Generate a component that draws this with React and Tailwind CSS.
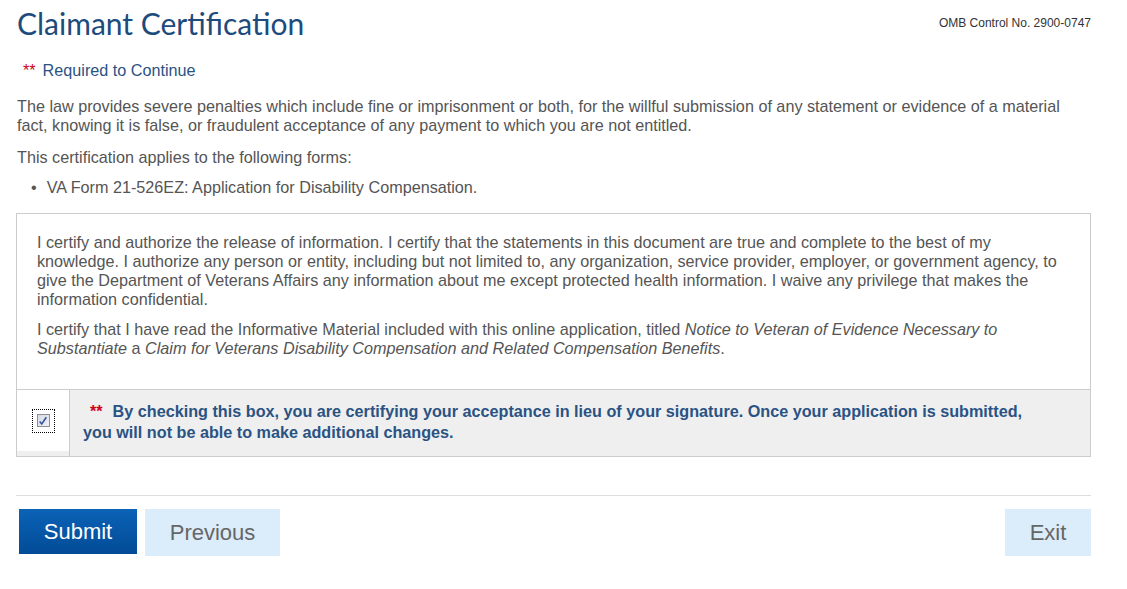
import React, { useState } from "react";

export default function App() {
  const [checked, setChecked] = useState(true);

  return (
    <div className="min-h-screen bg-white px-[17px] pt-[4px] font-['Liberation_Sans',Arial,sans-serif] text-[#555]">
      <div className="w-[1074px]">
        {/* Header */}
        <div className="flex items-start justify-between">
          <h1 className="font-['Lato',sans-serif] text-[30px] leading-[38px] text-[#1d4c7c]">Claimant Certification</h1>
          <p className="mt-[11px] text-[12px] leading-[16px] text-[#333]">OMB Control No. 2900-0747</p>
        </div>

        <p className="mt-[18px] pl-[6px] text-[16.2px] leading-[20px] text-[#2a5384]">
          <span className="mr-[7px] text-[#d0021b]">**</span>Required to Continue
        </p>

        <p className="mt-[17px] text-[16.2px] leading-[19px]">
          The law provides severe penalties which include fine or imprisonment or both, for the willful submission of any statement or evidence of a material fact, knowing it is false, or fraudulent acceptance of any payment to which you are not entitled.
        </p>
        <p className="mt-[13px] text-[16.2px] leading-[19px]">This certification applies to the following forms:</p>
        <ul className="mt-[11px] pl-[14px] text-[16.2px] leading-[19px]">
          <li className="flex gap-[10px]">
            <span>•</span>
            <span>VA Form 21-526EZ: Application for Disability Compensation.</span>
          </li>
        </ul>

        {/* Certification box */}
        <div className="mt-[16px] -ml-px w-[1075px] border border-[#ccc]">
          <div className="px-[20px] pt-[19px] pb-[31px] text-[16.2px] leading-[19px]">
            <p>
              I certify and authorize the release of information. I certify that the statements in this document are true and complete to the best of my knowledge. I authorize any person or entity, including but not limited to, any organization, service provider, employer, or government agency, to give the Department of Veterans Affairs any information about me except protected health information. I waive any privilege that makes the information confidential.
            </p>
            <p className="mt-[11px]">
              I certify that I have read the Informative Material included with this online application, titled{" "}
              <em>Notice to Veteran of Evidence Necessary to Substantiate</em> a{" "}
              <em>Claim for Veterans Disability Compensation and Related Compensation Benefits</em>.
            </p>
          </div>
          <div className="flex border-t border-[#ccc] bg-[#efefef]">
            <div className="flex h-[61px] w-[53px] shrink-0 items-center justify-center self-start border-r border-[#ccc] bg-white">
              <label className="flex h-[24px] w-[23px] items-center justify-center border border-dotted border-black">
                <input
                  type="checkbox"
                  checked={checked}
                  onChange={(e) => setChecked(e.target.checked)}
                  className="sr-only"
                />
                <span className="flex h-[13px] w-[13px] items-center justify-center border border-[#8f8f8f] bg-gradient-to-br from-[#d6dbe4] to-[#eef1f6]">
                  {checked && (
                    <svg viewBox="0 0 12 12" className="h-[10px] w-[10px]">
                      <path d="M2 6.5 L4.5 9.5 L10 1.5" fill="none" stroke="#3b55a3" strokeWidth="2" />
                    </svg>
                  )}
                </span>
              </label>
            </div>
            <div className="-ml-px flex-1 border-l border-[#ccc] pt-[11px] pb-[13px] pl-[13px] pr-[50px]">
              <p className="text-[16.2px] font-bold leading-[21px] text-[#2a5384]">
                <span className="ml-[7px] mr-[10px] text-[#d0021b]">**</span>
                By checking this box, you are certifying your acceptance in lieu of your signature. Once your application is submitted, you will not be able to make additional changes.
              </p>
            </div>
          </div>
        </div>

        <hr className="mt-[38px] -ml-px w-[1075px] border-t border-[#ddd]" />

        {/* Actions */}
        <div className="mt-[13px] flex items-start justify-between">
          <div className="flex gap-[8px]">
            <button className="ml-[2px] h-[45px] w-[118px] bg-gradient-to-b from-[#0b63b6] to-[#034b97] text-[22px] text-white">
              Submit
            </button>
            <button className="h-[47px] w-[135px] bg-[#dbecfa] text-[22px] text-[#666]">Previous</button>
          </div>
          <button className="h-[47px] w-[86px] bg-[#dbecfa] text-[22px] text-[#666]">Exit</button>
        </div>
      </div>
    </div>
  );
}
